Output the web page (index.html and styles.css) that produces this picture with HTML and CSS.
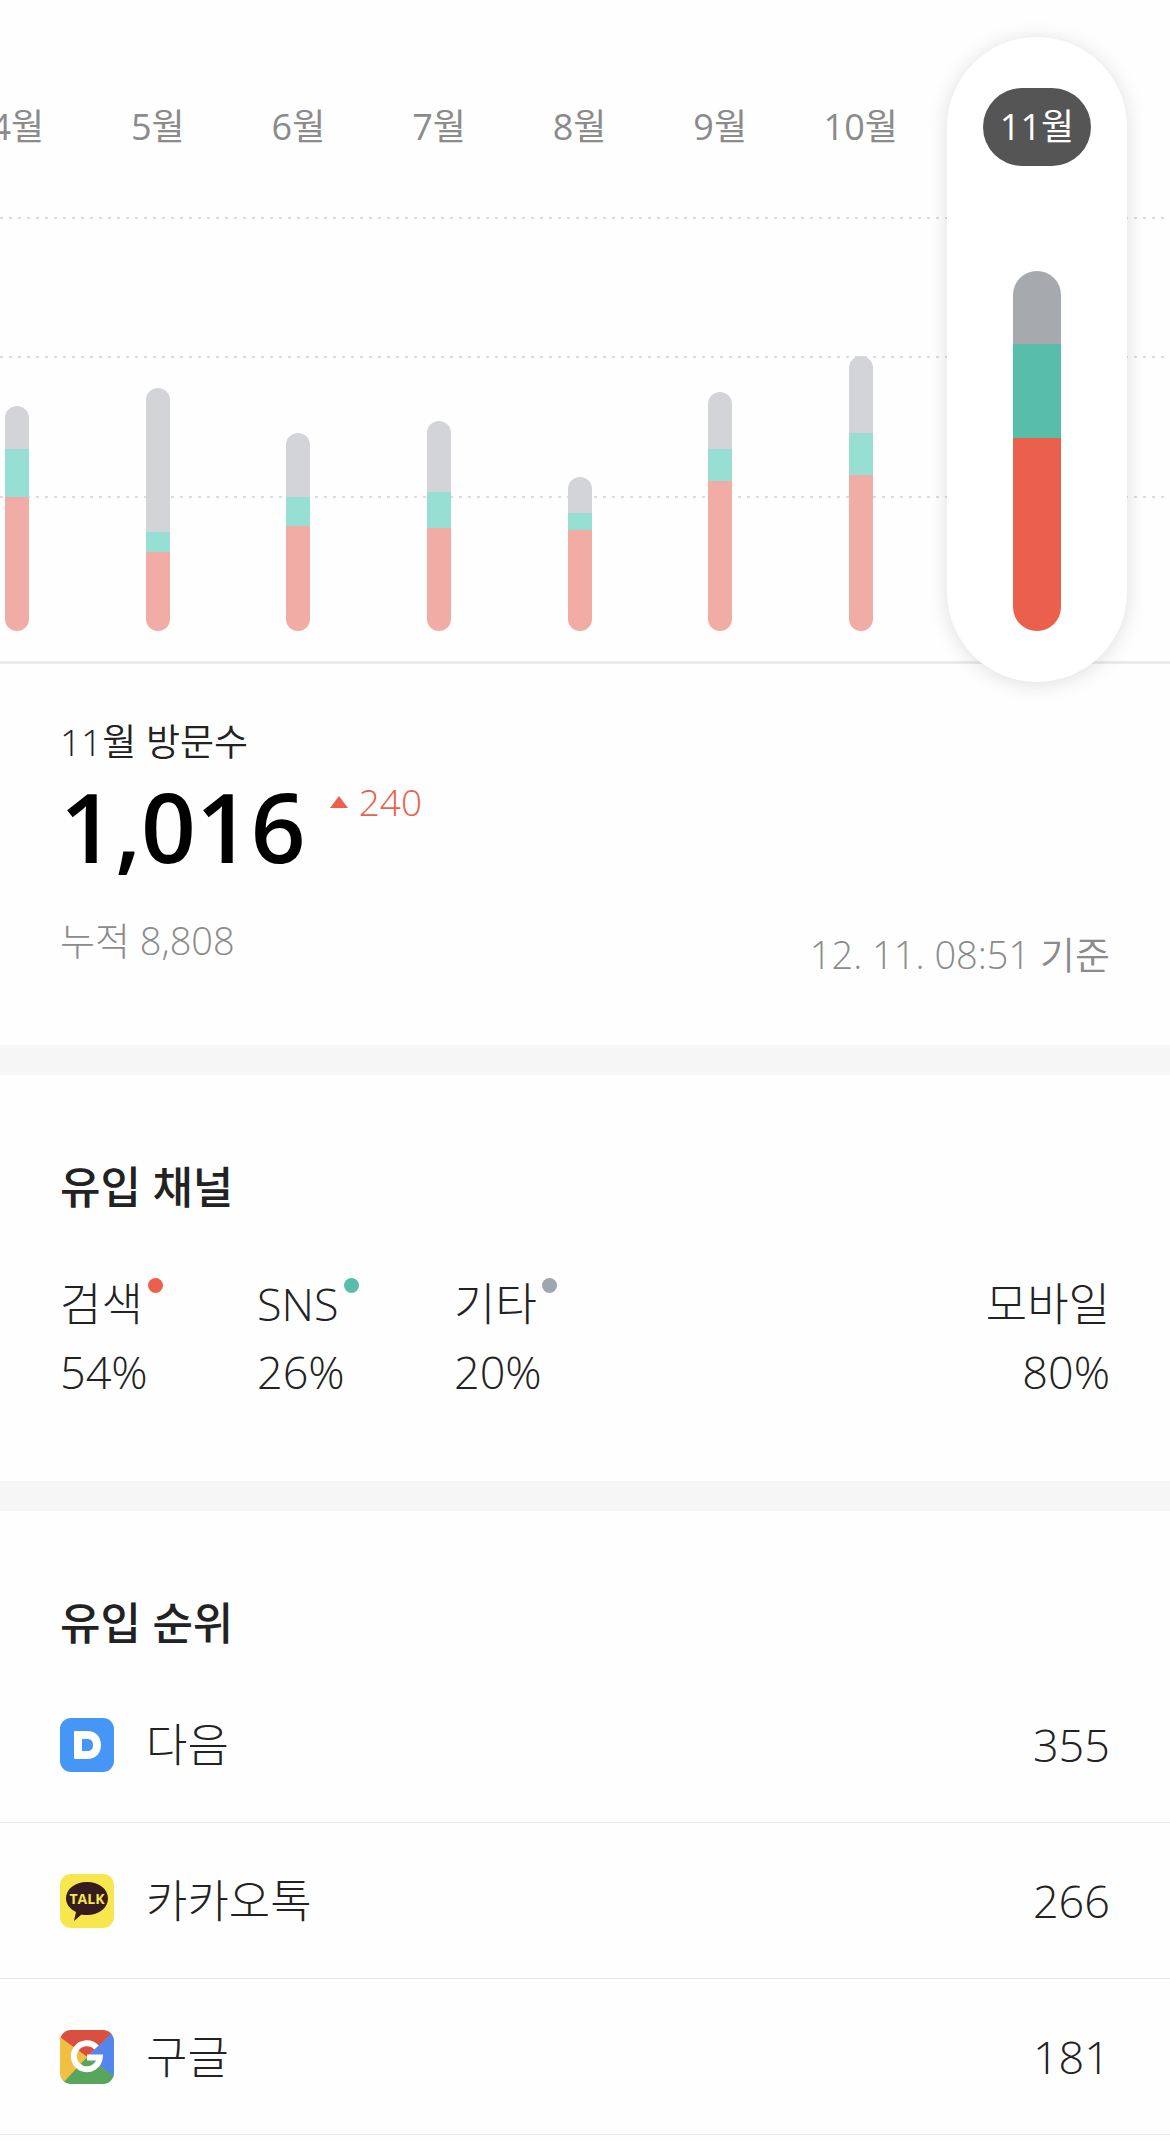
FILE: index.html
```html
<!DOCTYPE html>
<html lang="ko">
<head>
<meta charset="utf-8">
<meta name="viewport" content="width=device-width, initial-scale=1">
<title>방문 통계</title>
<link rel="stylesheet" href="styles.css">
</head>
<body>
<main>
  <section class="chart" aria-label="월별 방문수">
    <div class="months">
      <button type="button" class="month"><span class="month-label">4월</span><span class="bar"><i class="etc" style="height:43px"></i><i class="sns" style="height:48px"></i><i class="search" style="height:134px"></i></span></button>
      <button type="button" class="month"><span class="month-label">5월</span><span class="bar"><i class="etc" style="height:144px"></i><i class="sns" style="height:20px"></i><i class="search" style="height:79px"></i></span></button>
      <button type="button" class="month"><span class="month-label">6월</span><span class="bar"><i class="etc" style="height:64px"></i><i class="sns" style="height:29px"></i><i class="search" style="height:105px"></i></span></button>
      <button type="button" class="month"><span class="month-label">7월</span><span class="bar"><i class="etc" style="height:71px"></i><i class="sns" style="height:36px"></i><i class="search" style="height:103px"></i></span></button>
      <button type="button" class="month"><span class="month-label">8월</span><span class="bar"><i class="etc" style="height:36px"></i><i class="sns" style="height:17px"></i><i class="search" style="height:101px"></i></span></button>
      <button type="button" class="month"><span class="month-label">9월</span><span class="bar"><i class="etc" style="height:57px"></i><i class="sns" style="height:32px"></i><i class="search" style="height:150px"></i></span></button>
      <button type="button" class="month"><span class="month-label">10월</span><span class="bar"><i class="etc" style="height:77px"></i><i class="sns" style="height:42px"></i><i class="search" style="height:156px"></i></span></button>
    </div>
    <button type="button" class="month active" aria-pressed="true"><span class="month-label">11월</span><span class="bar"><i class="etc" style="height:73px"></i><i class="sns" style="height:94px"></i><i class="search" style="height:193px"></i></span></button>
  </section>

  <section class="summary">
    <div class="visits">
      <h1 class="visits-title">11월 방문수</h1>
      <p class="visits-count"><strong>1,016</strong><span class="rise"><svg width="18" height="12" viewBox="0 0 18 12" aria-hidden="true"><path d="M9 0l9 12H0z" fill="#ea604c"/></svg>240</span></p>
      <p class="total">누적 8,808</p>
    </div>
    <p class="updated">12. 11. 08:51 기준</p>
  </section>

  <section class="channels">
    <h2>유입 채널</h2>
    <dl>
      <div><dt class="dot-search">검색</dt><dd>54%</dd></div>
      <div><dt class="dot-sns">SNS</dt><dd>26%</dd></div>
      <div><dt class="dot-etc">기타</dt><dd>20%</dd></div>
      <div class="mobile"><dt>모바일</dt><dd>80%</dd></div>
    </dl>
  </section>

  <section class="ranking">
    <h2>유입 순위</h2>
    <ol>
      <li>
        <svg class="logo" viewBox="0 0 54 54" aria-hidden="true"><rect width="54" height="54" rx="11" fill="#4696f7"/><path fill="#fff" fill-rule="evenodd" d="M15 13h12c9 0 14 6 14 14s-5 14-14 14H15q-1 0-1-1V14q0-1 1-1zm7 8v12h5c4 0 6-2 6-6s-2-6-6-6z"/></svg>
        <span class="name">다음</span><span class="count">355</span>
      </li>
      <li>
        <svg class="logo" viewBox="0 0 54 54" aria-hidden="true"><rect width="54" height="54" rx="11" fill="#f7e64e"/><path fill="#371c1d" d="M27 8c12 0 21 7 21 16.500S39 41 27 41q-3 0-5.500-.5L14 47l2-9C10 35 6 30 6 24.500 6 15 15 8 27 8z"/><text class="talk" x="27" y="30" text-anchor="middle">TALK</text></svg>
        <span class="name">카카오톡</span><span class="count">266</span>
      </li>
      <li>
        <svg class="logo" viewBox="0 0 54 54" aria-hidden="true"><defs><clipPath id="g"><rect width="54" height="54" rx="11"/></clipPath></defs><g clip-path="url(#g)"><path fill="#d9503f" d="M0 0h54v2L27 27 0 8z"/><path fill="#5485ec" d="M54 1v46L27 27z"/><path fill="#58a55c" d="M54 46v8H0v-2l27-25z"/><path fill="#f1bf42" d="M0 7l27 20L2 54H0z"/></g><path fill="none" stroke="#fff" stroke-width="6" d="M36.500 17.500A13 13 0 1 0 39.800 27.500H27"/></svg>
        <span class="name">구글</span><span class="count">181</span>
      </li>
    </ol>
  </section>
</main>
</body>
</html>
```
FILE: styles.css
```css
* { box-sizing: border-box; }

body {
  margin: 0;
  background: #fefefe;
  color: #222;
  font-family: "Open Sans", "Noto Sans CJK KR", sans-serif;
  font-weight: 300;
  font-size: 45px;
  line-height: 60px;
  overflow-x: hidden;
}

h1, h2, p, dl, dd, ol { margin: 0; padding: 0; }

button {
  border: 0;
  padding: 0;
  background: none;
  color: inherit;
  font: inherit;
}

/* Monthly chart */
.chart {
  display: flex;
  align-items: flex-start;
  height: 664px;
  padding: 37px 43px 0 0;
  border-bottom: 3px solid #ebebeb;
  background-image:
    repeating-linear-gradient(90deg, #dcdcdc 0 3px, transparent 3px 9px),
    repeating-linear-gradient(90deg, #dcdcdc 0 3px, transparent 3px 9px),
    repeating-linear-gradient(90deg, #dcdcdc 0 3px, transparent 3px 9px);
  background-size: 100% 2px;
  background-position: 0 217px, 0 356px, 0 496px;
  background-repeat: no-repeat;
}

.months {
  display: flex;
  flex: 1;
  margin: 0 16px 0 -53px;
}

.month {
  display: flex;
  flex: 1;
  flex-direction: column;
  align-items: center;
  justify-content: space-between;
  height: 594px;
  padding-top: 51px;
}

.month-label {
  height: 78px;
  color: #8b8b8b;
  font-size: 36px;
  font-weight: 400;
  line-height: 78px;
}

.bar {
  display: flex;
  flex-direction: column;
  width: 24px;
  border-radius: 12px;
  overflow: hidden;
}

.etc { background: #d2d4d8; }
.sns { background: #97dfd3; }
.search { background: #f1ada5; }

.active {
  flex: none;
  width: 180px;
  height: 645px;
  padding-bottom: 51px;
  border-radius: 90px;
  background: #fff;
  box-shadow: 0 2px 20px rgba(0, 0, 0, .13);
}

.active .month-label {
  width: 108px;
  border-radius: 39px;
  background: #555;
  color: #fff;
}

.active .bar {
  width: 48px;
  border-radius: 24px;
}

.active .etc { background: #a6a9ad; }
.active .sns { background: #58beaa; }
.active .search { background: #ea604c; }

/* Visit summary */
.summary {
  display: flex;
  align-items: flex-end;
  justify-content: space-between;
  padding: 48px 60px 61px;
  border-bottom: 30px solid #f6f6f6;
}

.visits { padding-bottom: 14px; }

.visits-title {
  font-size: 37px;
  font-weight: 350;
}

.visits-count {
  display: flex;
  align-items: flex-start;
  gap: 24px;
  height: 110px;
}

.visits-count strong {
  color: #000;
  font-size: 96px;
  font-weight: 600;
  line-height: 108px;
}

.rise {
  display: flex;
  align-items: center;
  gap: 11px;
  color: #ea604c;
  font-size: 37px;
}

.total, .updated {
  color: #8b8b8b;
  font-size: 38px;
}

.total { padding-top: 28px; }
.updated { font-weight: 350; }

/* Inflow channels */
h2 {
  font-size: 44px;
  font-weight: 500;
  line-height: 60px;
}

.channels {
  padding: 82px 60px 75px;
  border-bottom: 30px solid #f6f6f6;
}

.channels dl {
  display: flex;
  padding-top: 53px;
}

.channels dl div { width: 197px; }

.channels dt, .channels dd { line-height: 68px; }

.channels dt::after {
  content: "";
  display: inline-block;
  width: 15px;
  height: 15px;
  margin-left: 5px;
  border-radius: 50%;
  vertical-align: 28px;
}

.dot-search::after { background: #ea604c; }
.dot-sns::after { background: #58beaa; }
.dot-etc::after { background: #9fa6b0; }

.channels .mobile {
  margin-left: auto;
  text-align: right;
}

.channels .mobile dt::after { display: none; }

/* Inflow ranking */
.ranking { padding: 82px 0 6px; }
.ranking h2 { padding: 0 60px; }

.ranking ol {
  padding-top: 14px;
  list-style: none;
}

.ranking li {
  display: flex;
  align-items: center;
  height: 156px;
  padding: 0 60px;
  border-bottom: 1px solid #e8e8e8;
}

.logo {
  width: 54px;
  height: 54px;
  margin-right: 32px;
}

.talk {
  fill: #f7e64e;
  font-size: 14px;
  font-weight: 700;
}

.count { margin-left: auto; }
```
